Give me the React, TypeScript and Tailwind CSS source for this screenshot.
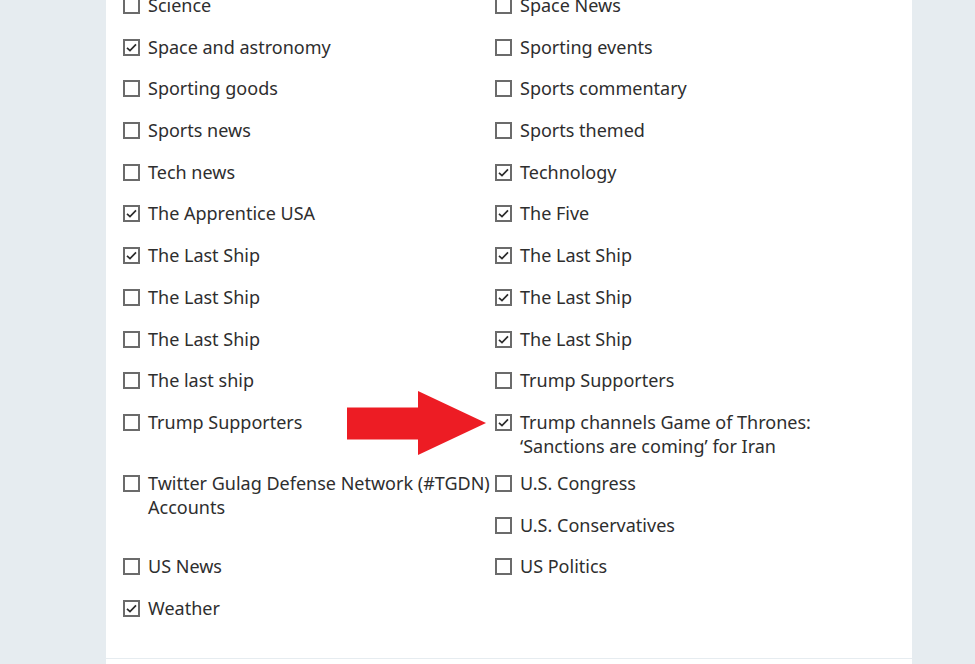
import React from "react";

type Topic = { label: string; checked: boolean };

const topics: Topic[] = [
  { label: "Science", checked: false },
  { label: "Space News", checked: false },
  { label: "Space and astronomy", checked: true },
  { label: "Sporting events", checked: false },
  { label: "Sporting goods", checked: false },
  { label: "Sports commentary", checked: false },
  { label: "Sports news", checked: false },
  { label: "Sports themed", checked: false },
  { label: "Tech news", checked: false },
  { label: "Technology", checked: true },
  { label: "The Apprentice USA", checked: true },
  { label: "The Five", checked: true },
  { label: "The Last Ship", checked: true },
  { label: "The Last Ship", checked: true },
  { label: "The Last Ship", checked: false },
  { label: "The Last Ship", checked: true },
  { label: "The Last Ship", checked: false },
  { label: "The Last Ship", checked: true },
  { label: "The last ship", checked: false },
  { label: "Trump Supporters", checked: false },
  { label: "Trump Supporters", checked: false },
  { label: "Trump channels Game of Thrones: ‘Sanctions are coming’ for Iran", checked: true },
  { label: "Twitter Gulag Defense Network (#TGDN) Accounts", checked: false },
  { label: "U.S. Congress", checked: false },
  { label: "U.S. Conservatives", checked: false },
  { label: "US News", checked: false },
  { label: "US Politics", checked: false },
  { label: "Weather", checked: true },
];

const Box = ({ checked }: { checked: boolean }) => (
  <span className="mt-[4px] mr-[8px] flex h-[17px] w-[17px] shrink-0 items-center justify-center border-2 border-[#6b6b6b] bg-white">
    {checked && (
      <svg width="13" height="13" viewBox="0 0 13 13" fill="none">
        <path d="M2 6.8 L5 9.6 L11 3.4" stroke="#2b2b2b" strokeWidth="1.7" />
      </svg>
    )}
  </span>
);

const Arrow = () => (
  <svg
    className="absolute left-[347px] top-[391px]"
    width="140"
    height="64"
    viewBox="0 0 140 64"
  >
    <polygon
      points="0,16.5 71,16.5 71,0 139,32 71,64 71,48.5 0,48.5"
      fill="#ed1c24"
    />
  </svg>
);

export default function App() {
  return (
    <div
      className="relative h-[664px] w-[975px] overflow-hidden bg-[#e6ecf0]"
      style={{ fontFamily: '"Noto Sans", "Open Sans", sans-serif' }}
    >
      <div className="ml-[106px] flow-root h-full w-[806px] bg-white">
        <div className="-mt-[7px] flow-root pl-[17px]">
          <ul className="w-[744px]">
            {topics.map((t, i) => (
              <li
                key={i}
                className="float-left mb-[13px] flex min-h-[28.7px] w-1/2 items-start text-[18px] leading-[24px] text-[#2e2e2e]"
              >
                <Box checked={t.checked} />
                <span>{t.label}</span>
              </li>
            ))}
          </ul>
        </div>
      </div>
      <div className="absolute left-[106px] top-[658px] h-px w-[806px] bg-[#e6ecf0]" />
      <Arrow />
    </div>
  );
}
